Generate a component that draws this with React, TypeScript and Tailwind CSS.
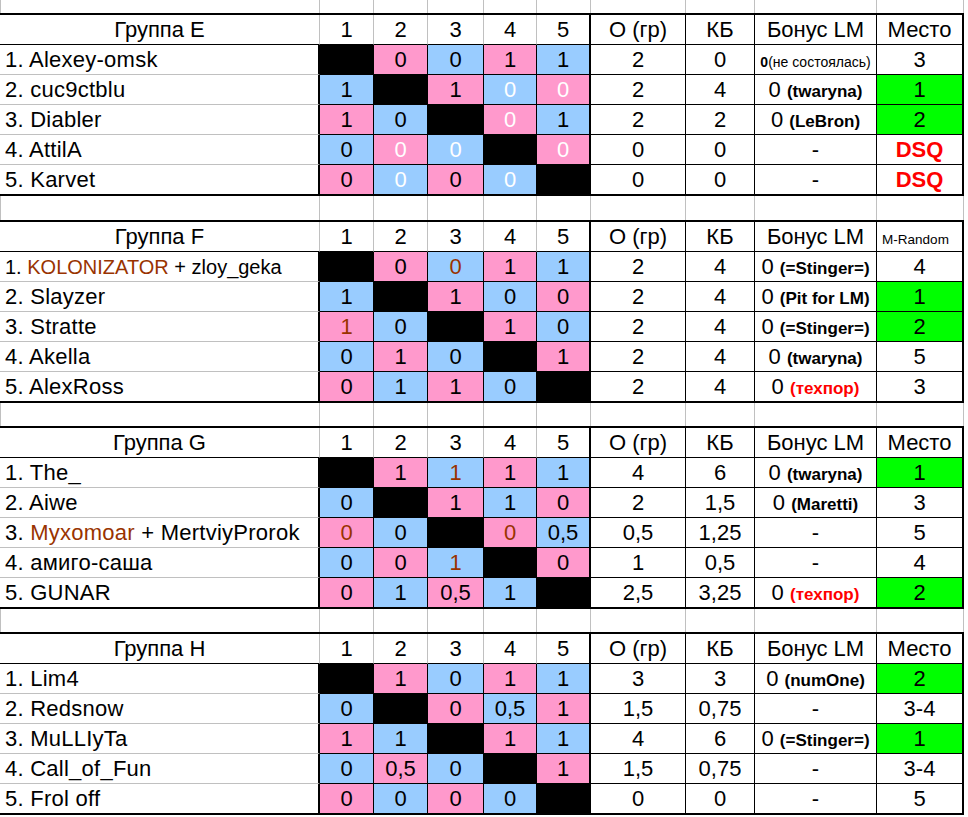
import type { ReactNode } from 'react';

type Bg = 'K' | 'P' | 'B';
type Tone = 'w' | 'br' | undefined;
type Cell = [Bg, string?, Tone?];

type Bonus = '-' | 'none' | { n: string; red?: boolean };

interface Row {
  name: ReactNode;
  cells: Cell[];
  o: string;
  kb: string;
  bonus: Bonus;
  place: string;
  green?: boolean;
  dsq?: boolean;
}

interface Group {
  title: string;
  lastHead: 'Место' | 'M-Random';
  rows: Row[];
}

const COLS = 'grid grid-cols-[320px_54px_54px_56px_53px_54px_95px_69px_122px_87px]';

const bgClass: Record<Bg, string> = {
  K: 'bg-black',
  P: 'bg-[#ff99cc]',
  B: 'bg-[#99ccff]',
};

const Brown = ({ children }: { children: ReactNode }) => (
  <span className="text-[#993300]">{children}</span>
);

const groups: Group[] = [
  {
    title: 'Группа E',
    lastHead: 'Место',
    rows: [
      { name: '1. Alexey-omsk', cells: [['K'], ['P', '0'], ['B', '0'], ['P', '1'], ['B', '1']], o: '2', kb: '0', bonus: 'none', place: '3' },
      { name: '2. cuc9ctblu', cells: [['B', '1'], ['K'], ['P', '1'], ['B', '0', 'w'], ['P', '0', 'w']], o: '2', kb: '4', bonus: { n: 'twaryna' }, place: '1', green: true },
      { name: '3. Diabler', cells: [['P', '1'], ['B', '0'], ['K'], ['P', '0', 'w'], ['B', '1']], o: '2', kb: '2', bonus: { n: 'LeBron' }, place: '2', green: true },
      { name: '4. AttilA', cells: [['B', '0'], ['P', '0', 'w'], ['B', '0', 'w'], ['K'], ['P', '0', 'w']], o: '0', kb: '0', bonus: '-', place: 'DSQ', dsq: true },
      { name: '5. Karvet', cells: [['P', '0'], ['B', '0', 'w'], ['P', '0'], ['B', '0', 'w'], ['K']], o: '0', kb: '0', bonus: '-', place: 'DSQ', dsq: true },
    ],
  },
  {
    title: 'Группа F',
    lastHead: 'M-Random',
    rows: [
      {
        name: (
          <span className="text-[20px] tracking-normal">
            1. <Brown>KOLONIZATOR</Brown> + zloy_geka
          </span>
        ),
        cells: [['K'], ['P', '0'], ['B', '0', 'br'], ['P', '1'], ['B', '1']], o: '2', kb: '4', bonus: { n: '=Stinger=' }, place: '4',
      },
      { name: '2. Slayzer', cells: [['B', '1'], ['K'], ['P', '1'], ['B', '0'], ['P', '0']], o: '2', kb: '4', bonus: { n: 'Pit for LM' }, place: '1', green: true },
      { name: '3. Stratte', cells: [['P', '1', 'br'], ['B', '0'], ['K'], ['P', '1'], ['B', '0']], o: '2', kb: '4', bonus: { n: '=Stinger=' }, place: '2', green: true },
      { name: '4. Akella', cells: [['B', '0'], ['P', '1'], ['B', '0'], ['K'], ['P', '1']], o: '2', kb: '4', bonus: { n: 'twaryna' }, place: '5' },
      { name: '5. AlexRoss', cells: [['P', '0'], ['B', '1'], ['P', '1'], ['B', '0'], ['K']], o: '2', kb: '4', bonus: { n: 'техпор', red: true }, place: '3' },
    ],
  },
  {
    title: 'Группа G',
    lastHead: 'Место',
    rows: [
      { name: '1. The_', cells: [['K'], ['P', '1'], ['B', '1', 'br'], ['P', '1'], ['B', '1']], o: '4', kb: '6', bonus: { n: 'twaryna' }, place: '1', green: true },
      { name: '2. Aiwe', cells: [['B', '0'], ['K'], ['P', '1'], ['B', '1'], ['P', '0']], o: '2', kb: '1,5', bonus: { n: 'Maretti' }, place: '3' },
      { name: <>3. <Brown>Myxomoar</Brown> + MertviyProrok</>, cells: [['P', '0', 'br'], ['B', '0'], ['K'], ['P', '0', 'br'], ['B', '0,5']], o: '0,5', kb: '1,25', bonus: '-', place: '5' },
      { name: '4. амиго-саша', cells: [['B', '0'], ['P', '0'], ['B', '1', 'br'], ['K'], ['P', '0']], o: '1', kb: '0,5', bonus: '-', place: '4' },
      { name: '5. GUNAR', cells: [['P', '0'], ['B', '1'], ['P', '0,5'], ['B', '1'], ['K']], o: '2,5', kb: '3,25', bonus: { n: 'техпор', red: true }, place: '2', green: true },
    ],
  },
  {
    title: 'Группа H',
    lastHead: 'Место',
    rows: [
      { name: '1. Lim4', cells: [['K'], ['P', '1'], ['B', '0'], ['P', '1'], ['B', '1']], o: '3', kb: '3', bonus: { n: 'numOne' }, place: '2', green: true },
      { name: '2. Redsnow', cells: [['B', '0'], ['K'], ['P', '0'], ['B', '0,5'], ['P', '1']], o: '1,5', kb: '0,75', bonus: '-', place: '3-4' },
      { name: '3. MuLLIyTa', cells: [['P', '1'], ['B', '1'], ['K'], ['P', '1'], ['B', '1']], o: '4', kb: '6', bonus: { n: '=Stinger=' }, place: '1', green: true },
      { name: '4. Call_of_Fun', cells: [['B', '0'], ['P', '0,5'], ['B', '0'], ['K'], ['P', '1']], o: '1,5', kb: '0,75', bonus: '-', place: '3-4' },
      { name: '5. Frol off', cells: [['P', '0'], ['B', '0'], ['P', '0'], ['B', '0'], ['K']], o: '0', kb: '0', bonus: '-', place: '5' },
    ],
  },
];

function Spacer({ h }: { h: string }) {
  return (
    <div className={COLS}>
      {Array.from({ length: 10 }).map((_, i) => (
        <div
          key={i}
          className={`${h} border-r border-r-[#c0c0c0] ${i === 0 ? 'border-l border-l-[#c0c0c0]' : ''}`}
        />
      ))}
    </div>
  );
}

function BonusText({ b }: { b: Bonus }) {
  if (b === '-') return <>-</>;
  if (b === 'none')
    return (
      <span className="text-[14px] leading-none">
        <b>0</b>(не состоялась)
      </span>
    );
  return (
    <>
      0{' '}
      <span className={`text-[17px] font-bold leading-none ${b.red ? 'text-[#ff0000]' : ''}`}>
        ({b.n})
      </span>
    </>
  );
}

function GroupTable({ g }: { g: Group }) {
  const head = ['1', '2', '3', '4', '5'];
  const gray = 'border-r border-r-[#c0c0c0]';
  return (
    <div className="w-[964px] border-t-2 border-t-black">
      {/* шапка */}
      <div className={COLS}>
        <div className={`h-[30px] leading-[29px] text-center border-b border-b-black ${gray}`}>{g.title}</div>
        {head.map((h, i) => (
          <div
            key={h}
            className={`h-[30px] leading-[29px] text-center border-b border-b-black ${
              i < 4 ? gray : 'border-r-2 border-r-black'
            }`}
          >
            {h}
          </div>
        ))}
        <div className="h-[30px] leading-[29px] text-center border-b border-b-black border-r border-r-black">О (гр)</div>
        <div className="h-[30px] leading-[29px] text-center border-b border-b-black border-r border-r-black">КБ</div>
        <div className="h-[30px] leading-[29px] text-center border-b border-b-black border-r border-r-black">Бонус LM</div>
        {g.lastHead === 'Место' ? (
          <div className="h-[30px] leading-[29px] text-center border-b border-b-black border-r-2 border-r-black">Место</div>
        ) : (
          <div className="h-[30px] leading-[29px] text-center pr-[8px] border-b border-b-black border-r-2 border-r-black">
            <span className="text-[13.5px] leading-none">M-Random</span>
          </div>
        )}
      </div>

      {g.rows.map((r, ri) => {
        const last = ri === g.rows.length - 1;
        const hb = last ? 'h-[31px] border-b-2 border-b-black' : 'h-[30px] border-b border-b-black';
        const nameB = last ? 'h-[31px] border-b-2 border-b-black' : 'h-[30px] border-b border-b-[#c0c0c0]';
        return (
          <div key={ri} className={COLS}>
            <div className={`${nameB} leading-[29px] pl-[5px] tracking-[0.25px] whitespace-nowrap border-r-2 border-r-black`}>
              {r.name}
            </div>
            {r.cells.map(([bg, v, tone], ci) => (
              <div
                key={ci}
                className={`${hb} leading-[29px] text-center ${bgClass[bg]} ${
                  ci < 4 ? 'border-r border-r-black' : 'border-r-2 border-r-black'
                } ${tone === 'w' ? 'text-white' : tone === 'br' ? 'text-[#993300]' : ''}`}
              >
                {v}
              </div>
            ))}
            <div className={`${hb} leading-[29px] text-center border-r border-r-black`}>{r.o}</div>
            <div className={`${hb} leading-[29px] text-center border-r border-r-black`}>{r.kb}</div>
            <div className={`${hb} leading-[29px] text-center whitespace-nowrap border-r border-r-black`}>
              <BonusText b={r.bonus} />
            </div>
            <div
              className={`${hb} leading-[29px] text-center border-r-2 border-r-black ${
                r.green ? 'bg-[#00ff00]' : ''
              } ${r.dsq ? 'font-bold text-[#ff0000]' : ''}`}
            >
              {r.place}
            </div>
          </div>
        );
      })}
    </div>
  );
}

export default function App() {
  return (
    <div className="w-[968px] h-[817px] overflow-hidden bg-white text-black text-[22px] font-['Liberation_Sans',Arial,sans-serif]">
      <Spacer h="h-[13px]" />
      <GroupTable g={groups[0]} />
      <Spacer h="h-[24px]" />
      <GroupTable g={groups[1]} />
      <Spacer h="h-[23px]" />
      <GroupTable g={groups[2]} />
      <Spacer h="h-[23px]" />
      <GroupTable g={groups[3]} />
    </div>
  );
}
